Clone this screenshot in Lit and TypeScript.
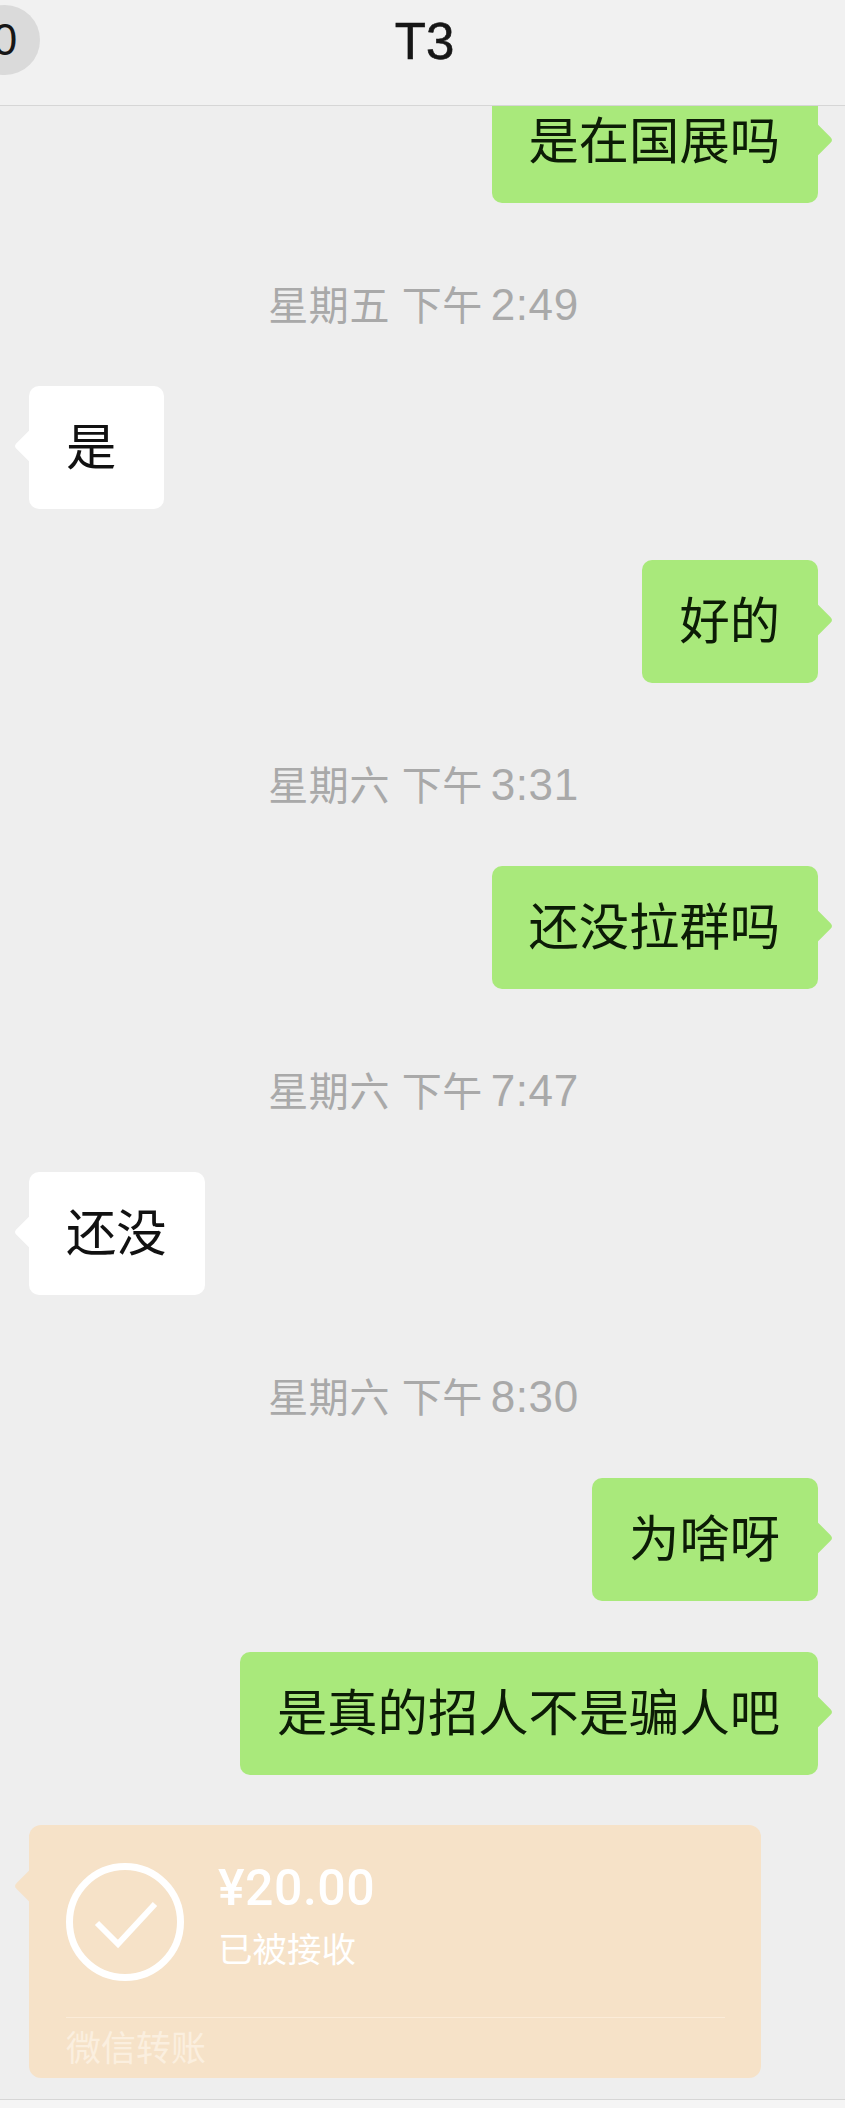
import { LitElement, html, css } from 'lit';
import { customElement } from 'lit/decorators.js';

type Item =
  | { kind: 'time'; day: string; clock: string }
  | { kind: 'msg'; side: 'me' | 'them'; text: string };

const ITEMS: Item[] = [
  { kind: 'msg', side: 'me', text: '是在国展吗' },
  { kind: 'time', day: '星期五 下午', clock: '2:49' },
  { kind: 'msg', side: 'them', text: '是' },
  { kind: 'msg', side: 'me', text: '好的' },
  { kind: 'time', day: '星期六 下午', clock: '3:31' },
  { kind: 'msg', side: 'me', text: '还没拉群吗' },
  { kind: 'time', day: '星期六 下午', clock: '7:47' },
  { kind: 'msg', side: 'them', text: '还没' },
  { kind: 'time', day: '星期六 下午', clock: '8:30' },
  { kind: 'msg', side: 'me', text: '为啥呀' },
  { kind: 'msg', side: 'me', text: '是真的招人不是骗人吧' },
];

@customElement('app-root')
export class AppRoot extends LitElement {
  static styles = css`
    :host {
      display: block;
      position: relative;
      width: 845px;
      height: 2108px;
      overflow: hidden;
      background: #eeeeee;
      font-family: 'Liberation Sans', 'Noto Sans CJK SC', sans-serif;
    }
    .header {
      position: relative;
      z-index: 2;
      height: 84px;
      display: flex;
      align-items: center;
      justify-content: center;
      background: #f1f1f1;
      border-bottom: 1px solid #d6d6d6;
      padding: 0 0 21px 4px;
    }
    .title {
      font-size: 51px;
      line-height: 60px;
      color: #161616;
      -webkit-text-stroke: 0.6px #161616;
    }
    .badge {
      position: absolute;
      left: -30px;
      top: 5px;
      width: 70px;
      height: 70px;
      border-radius: 50%;
      background: #dadada;
      color: #161616;
      font-size: 44px;
      line-height: 70px;
      text-align: center;
    }
    .list {
      display: flex;
      flex-direction: column;
      gap: 51px;
      margin-top: -26px;
      padding: 0 27px 0 29px;
    }
    .time {
      height: 40px;
      line-height: 40px;
      margin: 31px 0 10px;
      text-align: center;
      font-size: 40px;
      letter-spacing: 0.6px;
      color: #a9a9a9;
    }
    .clock {
      font-size: 44px;
      margin-left: -4px;
    }
    .row {
      display: flex;
    }
    .row.me {
      justify-content: flex-end;
    }
    .bubble {
      position: relative;
      min-width: 60px;
      padding: 37px 38px 36px 37px;
      border-radius: 10px;
      font-size: 50.3px;
      line-height: 50px;
      color: #111;
      white-space: nowrap;
    }
    .bubble::after {
      content: '';
      position: absolute;
      top: 47px;
      width: 26px;
      height: 26px;
      border-radius: 4px;
      transform: rotate(45deg);
      background: inherit;
    }
    .me .bubble {
      background: #a9e97b;
      color: #0c1c06;
    }
    .me .bubble::after {
      right: -10px;
    }
    .them .bubble {
      background: #ffffff;
    }
    .them .bubble::after {
      left: -10px;
    }
    .card {
      position: relative;
      box-sizing: border-box;
      width: 732px;
      height: 253px;
      margin-top: -1px;
      padding: 38px 36px 0 37px;
      border-radius: 12px;
      background: #f6e2c8;
      color: #ffffff;
    }
    .card::after {
      content: '';
      position: absolute;
      top: 48px;
      left: -10px;
      width: 26px;
      height: 26px;
      border-radius: 4px;
      transform: rotate(45deg);
      background: inherit;
    }
    .card-top {
      display: flex;
      gap: 34px;
      height: 154px;
      border-bottom: 1px solid #fbecd9;
    }
    .check {
      width: 118px;
      height: 118px;
      flex: none;
    }
    .card-text {
      display: flex;
      flex-direction: column;
      gap: 15px;
    }
    .amount {
      font-family: Roboto, 'Liberation Sans', sans-serif;
      font-weight: 500;
      font-size: 50px;
      line-height: 50px;
      letter-spacing: 0.5px;
    }
    .status {
      font-size: 34.5px;
      line-height: 44px;
    }
    .card-foot {
      margin-top: 9px;
      font-size: 35px;
      line-height: 44px;
      color: #fbefdf;
    }
    .toolbar {
      position: absolute;
      left: 0;
      top: 2099px;
      width: 845px;
      height: 9px;
      background: #f5f5f5;
      border-top: 1px solid #d6d6d6;
    }
  `;

  render() {
    return html`
      <div class="header">
        <div class="badge">0</div>
        <div class="title">T3</div>
      </div>
      <div class="list">
        ${ITEMS.map((item) =>
          item.kind === 'time'
            ? html`<div class="time">${item.day} <span class="clock">${item.clock}</span></div>`
            : html`<div class="row ${item.side}">
                <div class="bubble">${item.text}</div>
              </div>`
        )}
        <div class="card">
          <div class="card-top">
            <svg class="check" viewBox="0 0 118 118" fill="none" stroke="#fff">
              <circle cx="59" cy="59" r="55.5" stroke-width="7" />
              <path d="M31 60 L52 81 L89 41" stroke-width="6" />
            </svg>
            <div class="card-text">
              <div class="amount">¥20.00</div>
              <div class="status">已被接收</div>
            </div>
          </div>
          <div class="card-foot">微信转账</div>
        </div>
      </div>
      <div class="toolbar"></div>
    `;
  }
}
